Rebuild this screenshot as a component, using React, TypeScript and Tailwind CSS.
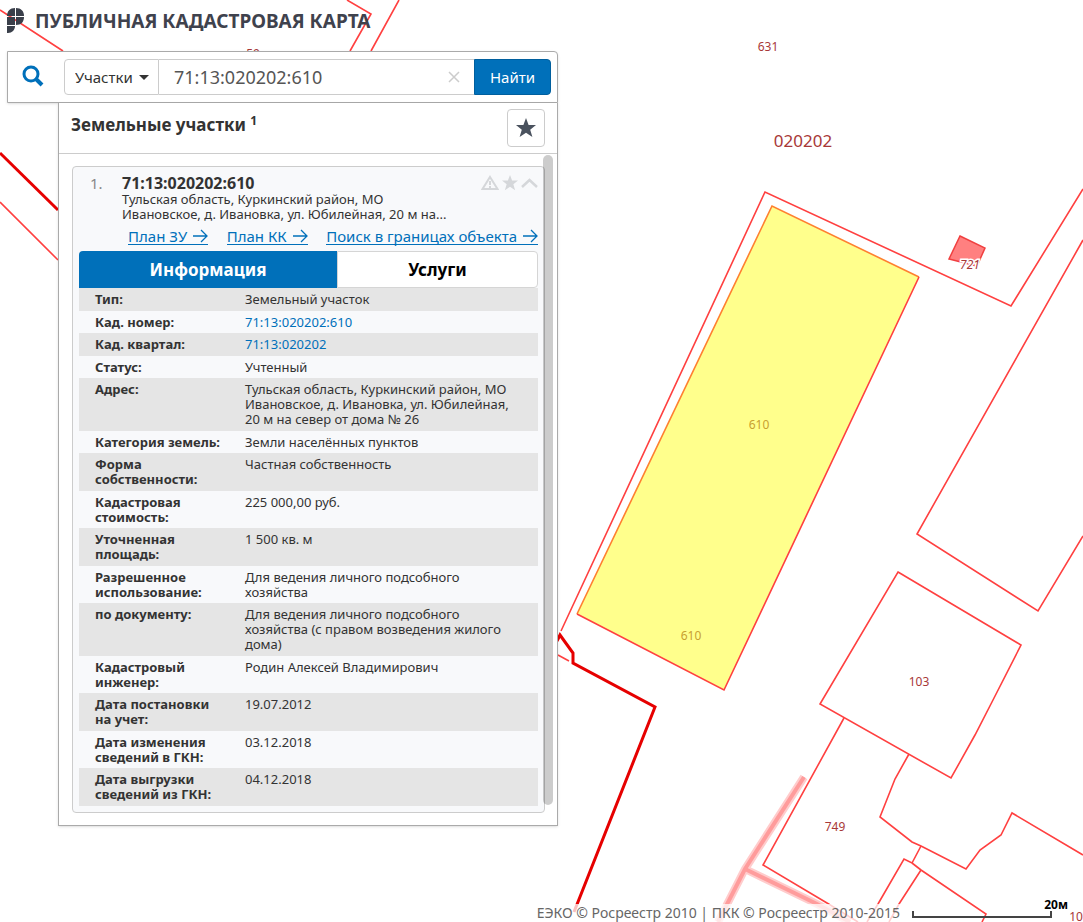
import React, { useState } from 'react';

interface Row {
  label: string;
  value: string;
  link?: boolean;
}

const ROWS: Row[] = [
  { label: 'Тип:', value: 'Земельный участок' },
  { label: 'Кад. номер:', value: '71:13:020202:610', link: true },
  { label: 'Кад. квартал:', value: '71:13:020202', link: true },
  { label: 'Статус:', value: 'Учтенный' },
  { label: 'Адрес:', value: 'Тульская область, Куркинский район, МО Ивановское, д. Ивановка, ул. Юбилейная, 20 м на север от дома № 26' },
  { label: 'Категория земель:', value: 'Земли населённых пунктов' },
  { label: 'Форма собственности:', value: 'Частная собственность' },
  { label: 'Кадастровая стоимость:', value: '225 000,00 руб.' },
  { label: 'Уточненная площадь:', value: '1 500 кв. м' },
  { label: 'Разрешенное использование:', value: 'Для ведения личного подсобного хозяйства' },
  { label: 'по документу:', value: 'Для ведения личного подсобного хозяйства (с правом возведения жилого дома)' },
  { label: 'Кадастровый инженер:', value: 'Родин Алексей Владимирович' },
  { label: 'Дата постановки на учет:', value: '19.07.2012' },
  { label: 'Дата изменения сведений в ГКН:', value: '03.12.2018' },
  { label: 'Дата выгрузки сведений из ГКН:', value: '04.12.2018' },
];

function ParcelMap() {
  return (
    <svg className="absolute inset-0 h-full w-full" aria-label="Карта">
      <g fill="none" stroke="#ffcccc" strokeWidth="8">
        <path d="M804 777L745 869L718 922M745 869L817 904L850 922" />
        <path d="M804 777L745 869L718 922M745 869L817 904L850 922" stroke="#ff9c9c" strokeWidth="4" />
      </g>
      <g fill="none" stroke="#ff4040" strokeWidth="1.6">
        <path d="M0 10L63 51M347 0L371 14L350 51M399 0L371 51M0 202L58 260" />
        <path d="M561 631L765 192L1011 306L1083 189" />
        <path d="M1083 240L917 534L1038 611L1083 536" />
        <path d="M898 572L1021 645L993 700L975 735L951 778L820 704Z" />
        <path d="M844 718L763 865L827 903L858 922" />
        <path d="M909 754L895 779L880 817L912 842L921 846L966 869L980 850L1001 835L1012 813L1083 855" />
        <path d="M921 846L912 863L904 859L878 904L867 922M912 863L921 870L986 914L982 922M921 870L899 904L889 922" />
        <path d="M558 655L569 661" />
      </g>
      <path d="M772 206L919 277L724 690L577 614Z" fill="#ffff8c" />
      <g fill="none" strokeWidth="1.6">
        <path d="M577 614L772 206L919 277" stroke="#ff8030" />
        <path d="M919 277L724 690L577 614" stroke="#ff4040" />
      </g>
      <g fill="none" stroke="#e60000" strokeWidth="3">
        <path d="M0 153L58 210" />
        <path d="M557 641L560 635L573 653L573 663L655 707L574 912" />
      </g>
      <path d="M960 236L985 248L977 266L949 259Z" fill="#ff8080" stroke="#f04040" strokeWidth="1.5" />
      <g className="font-['Noto_Sans',sans-serif]" textAnchor="middle" fontSize="12" fill="#a83838">
        <text x="253" y="58">59</text>
        <text x="768" y="51">631</text>
        <text x="803" y="147" fontSize="17">020202</text>
        <text x="759" y="429" fill="#c8a030">610</text>
        <text x="691" y="640" fill="#c8a030">610</text>
        <text x="919" y="686">103</text>
        <text x="835" y="831">749</text>
        <text x="1076" y="921">10</text>
        <text x="970" y="269" fontStyle="italic" stroke="#fff" strokeWidth="3" paintOrder="stroke">721</text>
      </g>
    </svg>
  );
}

function Logo() {
  return (
    <svg width="18" height="26" viewBox="0 0 18 26" fill="#3a3f4a" aria-hidden="true">
      <path d="M8 0V8H0C0 3 3 0 8 0Z" />
      <path d="M9 0C14 0 17 3 17 8H9Z" />
      <path d="M0 9H8V17H0Z" />
      <path d="M9 9H17C17 14 14 17 9 17Z" />
      <path d="M0 18H8C8 22 5 25 1 25H0Z" />
    </svg>
  );
}

function StarIcon({ className }: { className: string }) {
  return (
    <svg viewBox="0 0 20 20" className={className} fill="currentColor" aria-hidden="true">
      <path d="M10 0L12.6 7H20L14.2 11.7L16.4 19L10 14.8L3.6 19L5.8 11.7L0 7H7.4Z" />
    </svg>
  );
}

function ArrowLink({ children }: { children: string }) {
  return (
    <a href="#" className="flex items-center gap-[6px] border-b border-[#0070ba] text-[15px] leading-4 text-[#0070ba]">
      {children}
      <svg width="15" height="14" viewBox="0 0 15 14" fill="none" stroke="currentColor" strokeWidth="1.3" aria-hidden="true">
        <path d="M0 7H14M8 1L14 7L8 13" />
      </svg>
    </a>
  );
}

function SearchBar() {
  const [query, setQuery] = useState('71:13:020202:610');

  return (
    <form onSubmit={(e) => e.preventDefault()} className="flex h-[52px] w-full rounded-tr-sm border border-[#aaa] bg-white py-[7px] pr-[6px] shadow-sm">
      <div className="flex w-14 shrink-0 justify-center pt-1">
        <svg width="22" height="22" viewBox="0 0 22 22" className="mr-[6px] mt-[2px]" fill="none" stroke="#0070ba" strokeWidth="3" aria-hidden="true">
          <circle cx="9" cy="9" r="7" />
          <path d="M14 14L20 20" strokeWidth="4" />
        </svg>
      </div>
      <div className="relative w-[95px] shrink-0">
        <select aria-label="Тип объекта" className="h-full w-full appearance-none rounded-l-sm border border-[#ccc] bg-white pl-[10px] text-[15px] text-[#333]">
          <option>Участки</option>
          <option>ОКС</option>
        </select>
        <svg width="10" height="5" className="pointer-events-none absolute right-[10px] top-4" fill="#333" aria-hidden="true">
          <path d="M0 0H10L5 5Z" />
        </svg>
      </div>
      <div className="relative flex-1">
        <input
          aria-label="Поиск"
          value={query}
          onChange={(e) => setQuery(e.target.value)}
          className="h-full w-full border-y border-[#ccc] pl-[15px] text-[18px] text-[#555] outline-none"
        />
        <button type="button" aria-label="Очистить" onClick={() => setQuery('')} className="absolute right-[14px] top-3">
          <svg width="12" height="12" viewBox="0 0 12 12" stroke="#ccc" strokeWidth="1.5" aria-hidden="true">
            <path d="M1 1L11 11M11 1L1 11" />
          </svg>
        </button>
      </div>
      <button type="submit" className="w-[77px] shrink-0 rounded-r-sm border border-[#005f9e] bg-[#0070ba] text-[15px] text-white">
        Найти
      </button>
    </form>
  );
}

function InfoTable() {
  return (
    <table className="w-full table-fixed border-collapse text-left text-[13px] leading-[15px]">
      <tbody>
        {ROWS.map((row) => (
          <tr key={row.label} className="align-top odd:bg-[#e5e5e5] [&:nth-child(odd)>*]:pb-1">
            <th scope="row" className="w-[166px] pb-[3px] pl-4 pr-5 pt-1 font-bold">{row.label}</th>
            <td className="pb-[3px] pr-4 pt-1">
              {row.link ? <a href="#" className="text-[#0070ba]">{row.value}</a> : row.value}
            </td>
          </tr>
        ))}
      </tbody>
    </table>
  );
}

function ResultCard() {
  const [tab, setTab] = useState('info');

  return (
    <article className="rounded-sm border border-[#ccc] bg-[#f8f9fb] px-[6px] pb-[6px] pt-2">
      <div className="flex pl-[11px]">
        <span className="w-8 shrink-0 text-[15px] leading-4 text-[#888]">1.</span>
        <div className="min-w-0 flex-1">
          <h3 className="text-[16px] font-bold leading-4">71:13:020202:610</h3>
          <p className="mt-px max-w-[335px] text-[13px] leading-[15px]">
            Тульская область, Куркинский район, МО Ивановское, д. Ивановка, ул. Юбилейная, 20 м на...
          </p>
        </div>
        <div className="flex h-4 gap-[3px] text-[#d5d7da]">
          <svg width="18" height="16" viewBox="0 0 18 16" fill="none" stroke="currentColor" strokeWidth="2" aria-hidden="true">
            <path d="M9 2L16.500 14H1.500ZM9 6V10M9 11V13" />
          </svg>
          <StarIcon className="h-4 w-4" />
          <svg width="17" height="16" viewBox="0 0 17 16" fill="none" stroke="currentColor" strokeWidth="2.500" aria-hidden="true">
            <path d="M1 12L8.500 5L16 12" />
          </svg>
        </div>
      </div>
      <nav className="my-[6px] flex justify-between pl-[49px]">
        <ArrowLink>План ЗУ</ArrowLink>
        <ArrowLink>План КК</ArrowLink>
        <ArrowLink>Поиск в границах объекта</ArrowLink>
      </nav>
      <div role="tablist" className="flex h-[37px] text-[17px] font-bold">
        <button role="tab" aria-selected={tab === 'info'} onClick={() => setTab('info')} className="w-[258px] rounded-tl-sm bg-[#0070ba] text-white">
          Информация
        </button>
        <button role="tab" aria-selected={tab === 'services'} onClick={() => setTab('services')} className="flex-1 rounded-r-sm border border-[#d5d5d5] bg-white text-black">
          Услуги
        </button>
      </div>
      <InfoTable />
    </article>
  );
}

export default function App() {
  return (
    <main className="relative min-h-screen overflow-hidden bg-white font-['Noto_Sans',sans-serif] text-[#333]">
      <ParcelMap />
      <div className="relative w-[558px] max-w-full pl-[7px]">
        <header className="flex h-[51px] items-start gap-[10px] pt-2">
          <Logo />
          <h1 className="whitespace-nowrap text-[19px] font-bold leading-[26px] text-[#3f424d]">ПУБЛИЧНАЯ КАДАСТРОВАЯ КАРТА</h1>
        </header>
        <SearchBar />
        <section className="ml-[51px] border border-t-0 border-[#aaa] bg-white shadow-sm">
          <div className="flex h-[51px] items-start justify-between border-b border-[#ccc] pl-3 pr-3 pt-[6px]">
            <h2 className="pt-1 text-[17px] font-bold leading-6">
              Земельные участки <sup className="text-[12px]">1</sup>
            </h2>
            <button aria-label="Избранное" className="flex h-[38px] w-[38px] items-center justify-center rounded-sm border border-[#ccc] bg-white text-[#4a525e]">
              <StarIcon className="h-5 w-5" />
            </button>
          </div>
          <div className="relative pb-3 pl-[13px] pr-3 pt-3">
            <ResultCard />
            <div className="absolute bottom-5 right-1 top-px w-[10px] rounded-full bg-black/20" />
          </div>
        </section>
      </div>
      <footer className="absolute bottom-0 right-0 flex items-end">
        <p className="mr-1 whitespace-nowrap bg-white/75 px-2 text-[14px] leading-[18px] text-[#666]">
          ЕЭКО © Росреестр 2010 | ПКК © Росреестр 2010-2015
        </p>
        <div className="mr-[15px] flex flex-col items-end text-black">
          <span className="text-[12px] font-bold leading-3">20м</span>
          <div className="mb-1 mr-4 h-[7px] w-[140px] border-2 border-t-0 border-[#444]" />
        </div>
      </footer>
    </main>
  );
}
